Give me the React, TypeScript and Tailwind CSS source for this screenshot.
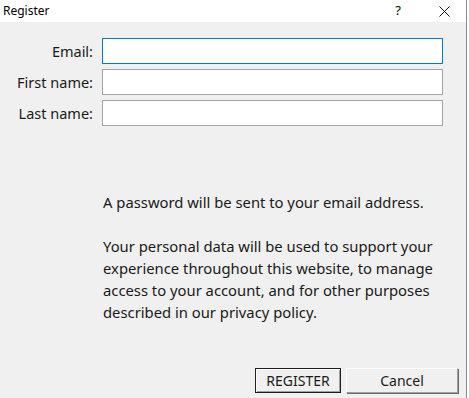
export default function App() {
  const fields = ['Email:', 'First name:', 'Last name:'];

  return (
    <div className="flex h-[398px] w-[469px] bg-white" style={{ fontFamily: '"Noto Sans", sans-serif' }}>
      <div className="flex w-[467px] flex-col border-r border-[#8a8a8a]">
        {/* title bar */}
        <div className="flex h-[22px] items-center bg-white text-[12px] text-black">
          <span className="pl-[3px]">Register</span>
          <span className="ml-auto w-[14px] text-center text-[13px]">?</span>
          <button className="ml-[32px] mr-[15px] flex h-[22px] w-[14px] items-center justify-center">
            <svg width="11" height="11" viewBox="0 0 11 11" stroke="#111" strokeWidth="1" fill="none">
              <path d="M0.5 0.5 L10.5 10.5 M10.5 0.5 L0.5 10.5" />
            </svg>
          </button>
        </div>

        {/* body */}
        <div className="flex flex-1 flex-col bg-[#f0f0f0] text-[#1a1a1a]">
          <div className="mt-[16px] flex flex-col gap-[5px]">
            {fields.map((label, i) => (
              <div key={label} className="flex items-center">
                <label className="w-[94px] pr-[1px] text-right text-[14.5px] leading-none">{label}</label>
                <input
                  className={`ml-[8px] h-[26px] w-[341px] bg-white px-1 outline-none ${
                    i === 0 ? 'border border-[#0078d7]' : 'border border-[#a5a5a5]'
                  }`}
                />
              </div>
            ))}
          </div>

          <div className="ml-[103px] mt-[65px] w-[345px] text-[14.8px] leading-[22px]">
            <p>A password will be sent to your email address.</p>
            <p className="mt-[22px]">
              Your personal data will be used to support your experience throughout this website, to manage
              access to your account, and for other purposes described in our privacy policy.
            </p>
          </div>

          <div className="mt-auto mb-[5px] flex justify-end gap-[5px] pr-[8px]">
            <button className="h-[25px] w-[86px] border border-[#1e1e1e] bg-[#f0f0f0] text-[14px] shadow-[inset_1px_1px_0_#ffffff,inset_-1px_-1px_0_#a0a0a0]">
              REGISTER
            </button>
            <button className="h-[25px] w-[112px] border border-t-white border-l-white border-r-[#a0a0a0] border-b-[#a0a0a0] bg-[#f0f0f0] text-[14px] shadow-[1px_1px_0_#696969]">
              Cancel
            </button>
          </div>
        </div>
      </div>
    </div>
  );
}
